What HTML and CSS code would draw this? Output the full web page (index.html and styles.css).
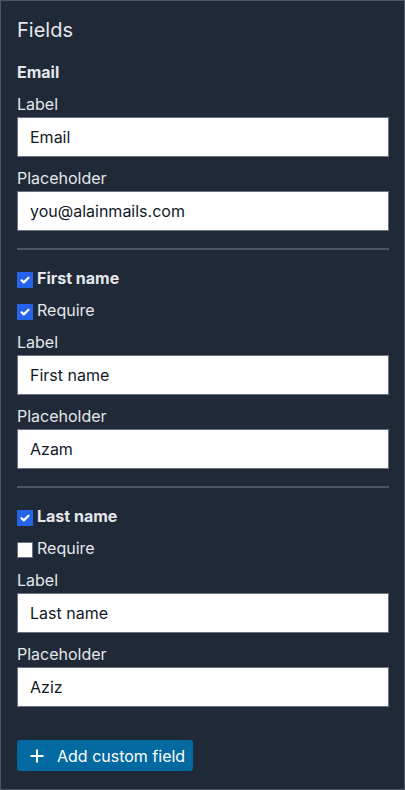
FILE: index.html
```html
<!DOCTYPE html>
<html>
<head>
<meta charset="utf-8">
<link rel="stylesheet" href="styles.css">
</head>
<body>
<div class="panel">
  <h2 class="title">Fields</h2>

  <div class="section">
    <div class="head">Email</div>
    <div class="field">
      <label class="lbl">Label</label>
      <input class="inp" type="text" value="Email">
    </div>
    <div class="field">
      <label class="lbl">Placeholder</label>
      <input class="inp" type="text" value="you@alainmails.com">
    </div>
  </div>

  <hr class="divider">

  <div class="section">
    <label class="check head"><span class="box on"><svg viewBox="0 0 16 16" width="16" height="16"><path d="M4.5 8.2l2.3 2.2 4.7-4.6" fill="none" stroke="#fff" stroke-width="2.2" stroke-linecap="round" stroke-linejoin="round"/></svg></span>First name</label>
    <label class="check"><span class="box on"><svg viewBox="0 0 16 16" width="16" height="16"><path d="M4.5 8.2l2.3 2.2 4.7-4.6" fill="none" stroke="#fff" stroke-width="2.2" stroke-linecap="round" stroke-linejoin="round"/></svg></span>Require</label>
    <div class="field">
      <label class="lbl">Label</label>
      <input class="inp" type="text" value="First name">
    </div>
    <div class="field">
      <label class="lbl">Placeholder</label>
      <input class="inp" type="text" value="Azam">
    </div>
  </div>

  <hr class="divider">

  <div class="section">
    <label class="check head"><span class="box on"><svg viewBox="0 0 16 16" width="16" height="16"><path d="M4.5 8.2l2.3 2.2 4.7-4.6" fill="none" stroke="#fff" stroke-width="2.2" stroke-linecap="round" stroke-linejoin="round"/></svg></span>Last name</label>
    <label class="check"><span class="box off"></span>Require</label>
    <div class="field">
      <label class="lbl">Label</label>
      <input class="inp" type="text" value="Last name">
    </div>
    <div class="field">
      <label class="lbl">Placeholder</label>
      <input class="inp" type="text" value="Aziz">
    </div>
  </div>

  <button class="add"><svg viewBox="0 0 14 14" width="14" height="14"><path d="M7 0.5v13M0.5 7h13" stroke="#fff" stroke-width="2" fill="none"/></svg><span>Add custom field</span></button>
</div>
</body>
</html>
```
FILE: styles.css
```css
* { box-sizing: border-box; }
html, body { margin: 0; padding: 0; }
body {
  width: 405px;
  height: 790px;
  font-family: Inter, "Noto Sans", sans-serif;
  font-size: 16px;
  color: #e5e7eb;
  background: #ffffff;
}
.panel {
  width: 405px;
  height: 790px;
  background: #1f2937;
  border: 1px solid #4b5563;
  padding: 15px 15px 0 16px;
  display: flex;
  flex-direction: column;
}
.title {
  margin: 0 0 18px;
  font-size: 20px;
  font-weight: 400;
  line-height: 28px;
  color: #e5e7eb;
  flex: none;
}
.section {
  display: flex;
  flex-direction: column;
  gap: 12px;
  flex: none;
}
.head {
  font-weight: 700;
  line-height: 20px;
}
.field {
  display: flex;
  flex-direction: column;
  gap: 3px;
}
.field + .field {
  margin-top: -1px;
}
.lbl {
  line-height: 20px;
}
.inp {
  display: block;
  height: 40px;
  width: 100%;
  border: 1px solid #6b7280;
  background: #fff;
  padding: 0 12px;
  font-family: Inter, "Noto Sans", sans-serif;
  font-size: 16px;
  color: #111827;
  outline: none;
  margin: 0;
  flex: none;
}
.divider {
  border: 0;
  height: 2px;
  background: #4b5563;
  margin: 17px 0 18px;
  flex: none;
}
.check {
  display: flex;
  align-items: flex-end;
  gap: 4px;
  height: 20px;
  line-height: 20px;
}
.box {
  width: 16px;
  height: 16px;
  display: inline-flex;
  align-items: center;
  justify-content: center;
  flex: none;
}
.box.on { background: #2563eb; }
.box.off { background: #fff; border: 1px solid #6b7280; }
.add {
  margin-top: 33px;
  align-self: flex-start;
  height: 31px;
  background: #0369a1;
  border: 0;
  border-radius: 3px;
  color: #fff;
  font-family: Inter, "Noto Sans", sans-serif;
  font-size: 16px;
  white-space: nowrap;
  display: flex;
  align-items: center;
  gap: 13px;
  padding: 0 8px 0 13px;
  flex: none;
}
```
